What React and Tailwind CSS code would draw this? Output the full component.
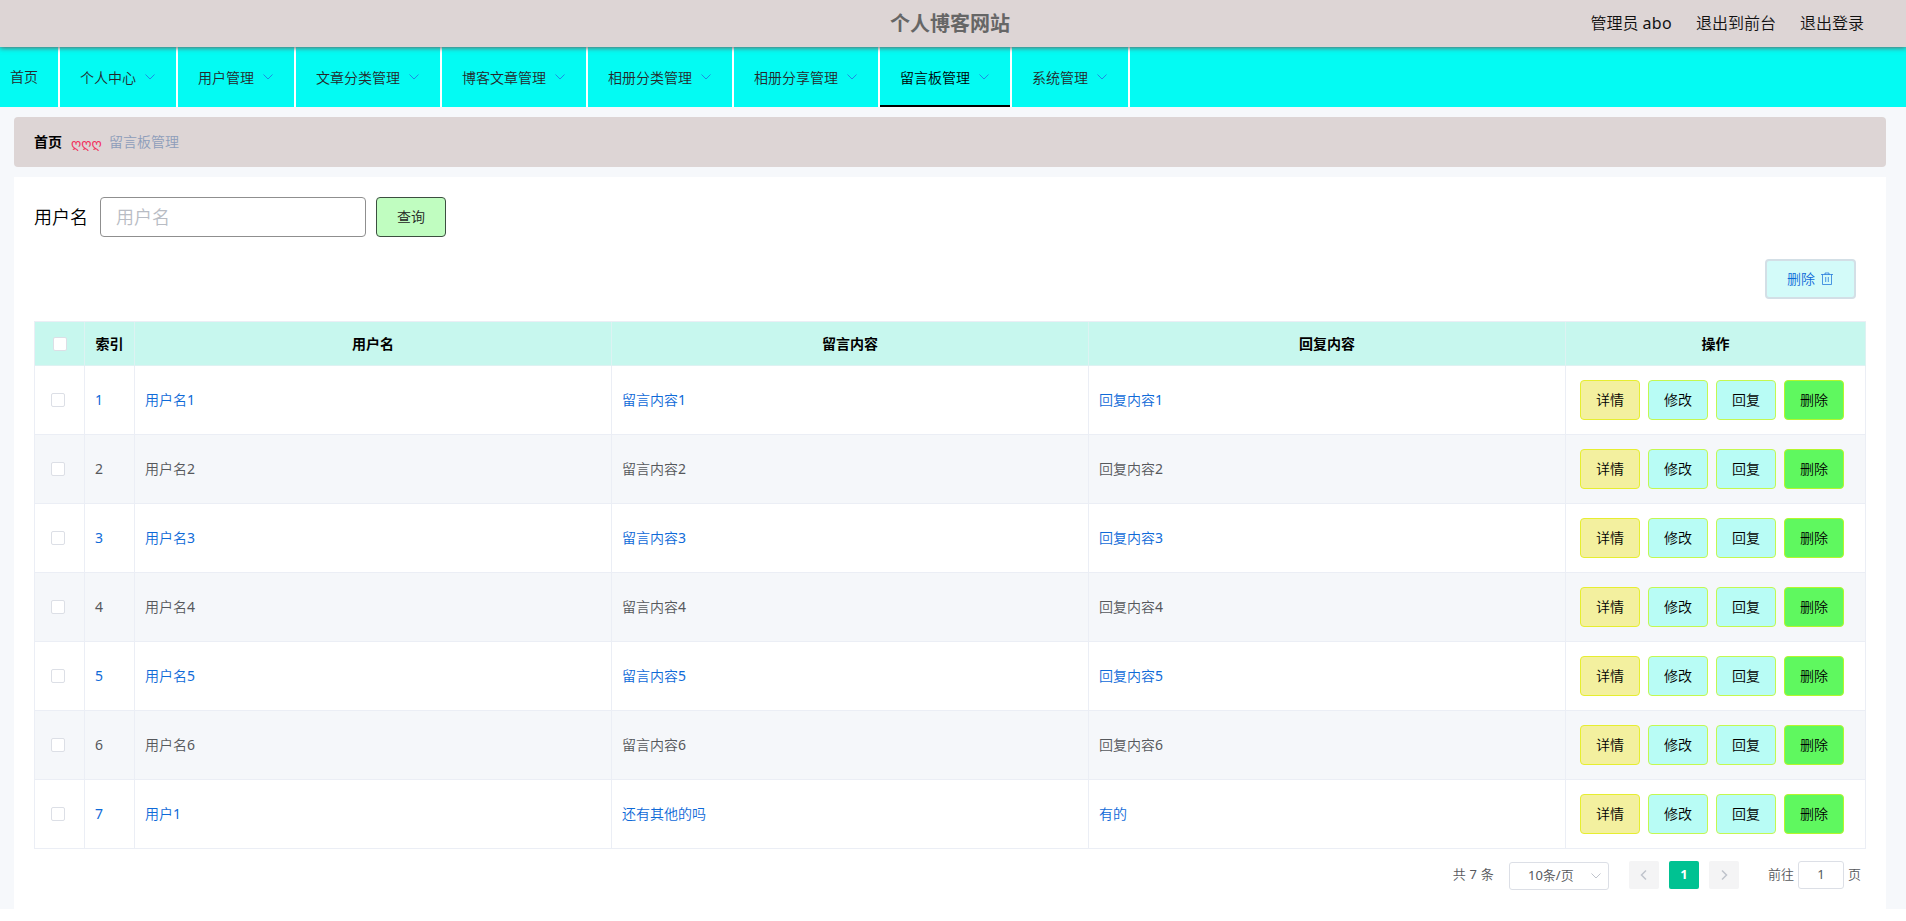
import React from "react";

const MENU = ["个人中心", "用户管理", "文章分类管理", "博客文章管理", "相册分类管理", "相册分享管理", "留言板管理", "系统管理"];
const ACTIVE = "留言板管理";

const ROWS = [
  ["1", "用户名1", "留言内容1", "回复内容1"],
  ["2", "用户名2", "留言内容2", "回复内容2"],
  ["3", "用户名3", "留言内容3", "回复内容3"],
  ["4", "用户名4", "留言内容4", "回复内容4"],
  ["5", "用户名5", "留言内容5", "回复内容5"],
  ["6", "用户名6", "留言内容6", "回复内容6"],
  ["7", "用户1", "还有其他的吗", "有的"],
];

const ACTIONS = [
  ["详情", "bg-[#f3f09f] border-[#e6ee30]"],
  ["修改", "bg-[#b8fcf5] border-[#c4f850]"],
  ["回复", "bg-[#b8fcf5] border-[#c4f850]"],
  ["删除", "bg-[#5ff85f] border-[#b4f62c]"],
];

const GRID = "grid grid-cols-[50px_50px_477px_477px_477px_300px]";
const CELL = "flex items-center border-r border-[#ebeef5]";

// Latin letters and digits are set in regular weight beside the lighter Chinese glyphs.
function Mixed({ children }) {
  return (
    <span className="whitespace-pre">
      {children.split(/([ -~]+)/).map((part, i) =>
        i % 2 ? (
          <span key={i} className="font-normal">
            {part}
          </span>
        ) : (
          part
        )
      )}
    </span>
  );
}

function Chevron({ className }) {
  return (
    <svg viewBox="0 0 12 12" className={className} fill="none" stroke="currentColor" strokeWidth="1">
      <path d="M1.5 3.5 6 8l4.5-4.5" />
    </svg>
  );
}

function Checkbox() {
  return <span className="block size-[14px] rounded-[2px] border border-[#dcdfe6] bg-white" />;
}

function TrashIcon() {
  return (
    <svg viewBox="0 0 14 14" className="ml-[5px] size-[14px]" fill="none" stroke="currentColor" strokeWidth="0.7">
      <path d="M1 2.5h12M5 2.500V1h4v1.500M2.500 2.500v10h9v-10M5.700 5v5M8.300 5v5" />
    </svg>
  );
}

function Header() {
  return (
    <header className="relative z-10 grid h-[47px] grid-cols-[1fr_120px_1fr] items-center bg-[#ddd5d5] pr-[42px] shadow-[0_1px_5px_#666]">
      <h1 className="col-start-2 ml-[18px] w-[130px] text-[20px] leading-[46px] font-bold text-[#666]">个人博客网站</h1>
      <div className="flex justify-end gap-6 pb-[2px] text-base leading-[44px] text-[#111]">
        <span>
          管理员 <span className="font-normal tracking-[0.3px]">abo</span>
        </span>
        <span>退出到前台</span>
        <span>退出登录</span>
      </div>
    </header>
  );
}

function Nav() {
  return (
    <nav className="flex h-[60px] bg-[#03fbf3] text-sm text-[#25282b]">
      <div className="flex w-[60px] items-center border-r-2 border-white pb-[1px] pl-[10px]">首页</div>
      {MENU.map((m) => (
        <div
          key={m}
          className={
            m === ACTIVE
              ? "flex items-center border-r-2 border-white text-black"
              : "flex items-center border-r-2 border-white"
          }
        >
          <div
            className={
              m === ACTIVE
                ? "flex h-full items-center border-b-2 border-black px-5 pt-[3px]"
                : "flex h-full items-center border-b-2 border-transparent px-5 pt-[3px]"
            }
          >
            <span>{m}</span>
            <Chevron className="mb-[2px] ml-2 size-3 text-[#1c8ce4]" />
          </div>
        </div>
      ))}
    </nav>
  );
}

function Breadcrumb() {
  return (
    <div className="flex h-[50px] items-center rounded bg-[#ddd5d5] px-5 pb-[1px] text-sm">
      <span className="font-bold text-black">首页</span>
      <span className="mx-[9px] w-[29px] pt-[5px] font-['DejaVu_Sans',sans-serif] text-[13px] font-normal text-[#f2305c]">ღღღ</span>
      <span className="text-[#8d9dba]">留言板管理</span>
    </div>
  );
}

function Table() {
  return (
    <div className="mt-[22px] w-[1832px] border-t border-l border-[#ebeef5] text-sm">
      <div className={GRID + " h-11 bg-[#c7f7ee] font-bold text-black"}>
        <div className="flex items-center border-r border-b border-[#ebeef5]/60 pl-[18px]">
          <Checkbox />
        </div>
        {["索引", "用户名", "留言内容", "回复内容", "操作"].map((h) => (
          <div key={h} className="flex items-center justify-center border-r border-b border-[#ebeef5]/60">
            {h}
          </div>
        ))}
      </div>
      {ROWS.map((r, i) => (
        <div
          key={r[0]}
          className={
            GRID +
            (i % 2 ? " h-[69px] border-b border-[#ebeef5] bg-[#f5f7fa] text-[#56585c]" : " h-[69px] border-b border-[#ebeef5] bg-white text-[#0f6ad8]")
          }
        >
          <div className={CELL + " pl-4"}>
            <Checkbox />
          </div>
          {r.map((c) => (
            <div key={c} className={CELL + " px-[10px]"}>
              <Mixed>{c}</Mixed>
            </div>
          ))}
          <div className={CELL + " gap-2 pl-[14px]"}>
            {ACTIONS.map(([t, c]) => (
              <button key={t} className={"h-10 w-[60px] rounded border text-sm text-black " + c}>
                {t}
              </button>
            ))}
          </div>
        </div>
      ))}
    </div>
  );
}

function Pagination() {
  return (
    <div className="mt-3 flex h-7 items-center justify-end pr-[5px] text-[13px] text-[#56585c]">
      <span className="tracking-[0.2px]">
        <Mixed>共 7 条</Mixed>
      </span>
      <div className="mt-[2px] ml-[15px] flex h-7 w-[100px] items-center justify-between rounded-[3px] border border-[#dcdfe6] pr-[6px] pl-[18px]">
        <Mixed>10条/页</Mixed>
        <Chevron className="size-3 text-[#c0c4cc]" />
      </div>
      <button className="ml-5 flex h-7 w-[30px] items-center justify-center rounded-[2px] bg-[#f4f4f5] text-[#c0c4cc]">
        <svg viewBox="0 0 12 12" className="size-3" fill="none" stroke="currentColor" strokeWidth="1.5">
          <path d="M8 1.5 3.5 6 8 10.500" />
        </svg>
      </button>
      <button className="ml-[10px] h-7 w-[30px] rounded-[2px] bg-[#00c292] font-bold text-white">1</button>
      <button className="ml-[10px] flex h-7 w-[30px] items-center justify-center rounded-[2px] bg-[#f4f4f5] text-[#c0c4cc]">
        <svg viewBox="0 0 12 12" className="size-3" fill="none" stroke="currentColor" strokeWidth="1.5">
          <path d="M4 1.5 8.500 6 4 10.500" />
        </svg>
      </button>
      <span className="ml-[29px]">前往</span>
      <div className="mx-1 flex h-7 w-[46px] items-center justify-center rounded-[3px] border border-[#dcdfe6] font-normal">1</div>
      <span>页</span>
    </div>
  );
}

export default function App() {
  return (
    <div className="h-[921px] overflow-hidden bg-white font-['Noto_Sans','Noto_Sans_CJK_SC',sans-serif] font-[350]">
      <Header />
      <Nav />
      <main className="h-[802px] bg-[#f6f8fb] pt-[10px] pr-5 pl-[14px]">
        <Breadcrumb />
        <section className="mt-[10px] h-[732px] bg-white px-5 pt-5">
          <div className="flex h-10 items-center">
            <label className="w-[66px] text-[18px] text-black">用户名</label>
            <div className="flex h-10 w-[266px] items-center rounded border border-[#8f8f8f] pl-[15px] text-[18px] text-[#b8bcc4]">
              用户名
            </div>
            <button className="ml-[10px] h-10 w-[70px] rounded border border-[#3c4e40] bg-[#c0fdc0] text-sm text-[#222]">查询</button>
          </div>
          <div className="mt-[22px] flex justify-end pr-[10px]">
            <button className="flex h-10 w-[91px] items-center rounded border-2 border-[#d3dfe6] bg-[#d3fbf9] pl-5 text-sm text-[#0f6ad8]">
              删除
              <TrashIcon />
            </button>
          </div>
          <Table />
          <Pagination />
        </section>
      </main>
    </div>
  );
}
